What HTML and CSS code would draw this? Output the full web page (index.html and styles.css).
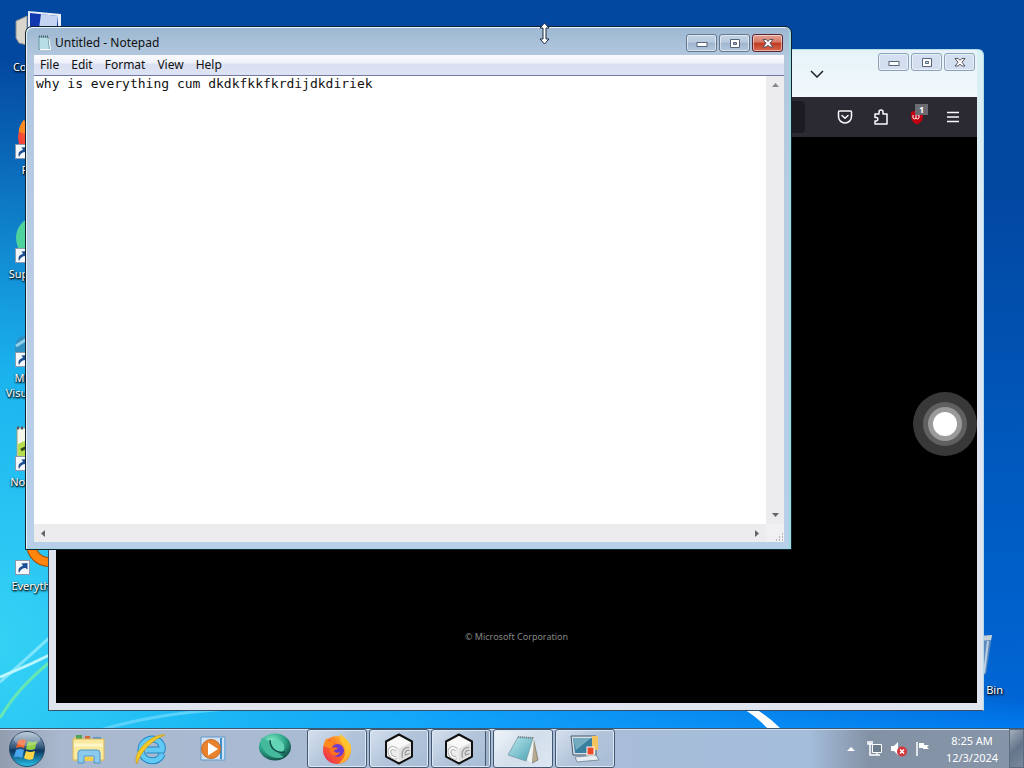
FILE: index.html
```html
<!DOCTYPE html>
<html lang="en">
<head>
  <meta charset="UTF-8" />
  <title>Desktop</title>
  <link rel="stylesheet" href="styles.css">
</head>
<body>

  <!-- shared symbols -->
  <svg class="defs" width="0" height="0" aria-hidden="true">
    <symbol id="shortcut" viewBox="0 0 15 15">
      <rect x=".5" y=".5" width="14" height="14" fill="#f4f8fc" stroke="#8a9bb0" />
      <path d="M4 13C2.500 9 4.500 6.500 8 6L6.500 3.500L12.500 3V9.500L10.500 8C7.500 8 5.500 9.500 4 13Z" fill="#1d4f96" />
    </symbol>
    <symbol id="min" viewBox="0 0 12 12">
      <rect x="1" y="5.500" width="10" height="4" fill="#fff" stroke="#56647a" />
    </symbol>
    <symbol id="max" viewBox="0 0 12 12">
      <path d="M1.500 2.500H10.500V10.500H1.500ZM4.500 5.500V7.500H7.500V5.500Z" fill="#fff" fill-rule="evenodd" stroke="#56647a" />
    </symbol>
    <symbol id="close" viewBox="0 0 12 12">
      <path d="M1 2.500H4.200L6 4.400L7.800 2.500H11L8 6.300L11 10H7.800L6 8.100L4.200 10H1L4 6.300Z" fill="#fff" stroke="#56505f" />
    </symbol>
    <symbol id="cube" viewBox="0 0 32 32">
      <path d="M16 1.500L29 8.500V23.500L16 30.500L3 23.500V8.500Z" fill="#f8f8f8" stroke="#111" stroke-width="2" stroke-linejoin="round" />
      <path d="M4 9.500L16 15.500V29L4 23Z" fill="#ececec" />
      <path d="M16 15.500L28 9.500V23L16 29Z" fill="#e0e0e0" />
      <path d="M13.500 16.500C9 13 5 16.500 7 21C8 24 11 25.500 13.500 24.500" fill="none" stroke="#aaa" stroke-width="3.500" />
      <path d="M13.500 16.500C9 13 5 16.500 7 21C8 24 11 25.500 13.500 24.500" fill="none" stroke="#fff" stroke-width="1.800" />
      <path d="M26 14.500C21 14 18 18 19.500 25M26.500 17.500C23 17 21.500 19 22.500 22L26.500 20.500" fill="none" stroke="#9a9a9a" stroke-width="1.300" />
    </symbol>
    <symbol id="firefox" viewBox="0 0 32 32">
      <circle cx="16" cy="17" r="14" fill="url(#fox)" />
      <path d="M19 1C25 5 27 8 30 13C31 22 25 30 17 31C25 25 26 18 22 12C19 8 18 5 19 1Z" fill="#ffc72e" opacity=".85" />
      <path d="M2.500 13C3 9 4.500 7 6 5L8 9L13 8L11 11L15 14L11 16Z" fill="#ff8b20" />
      <circle cx="16.500" cy="17.500" r="6.500" fill="#6b3bd0" />
      <path d="M9 15C12 14 14 14 17 15C16 17 14 16 13 18C14 20 17 20 19 19C17 24 11 24 9 19Z" fill="#ff701f" />
    </symbol>
    <linearGradient id="fox" x1="1" y1="0" x2="0" y2="1">
      <stop offset="0" stop-color="#ffdc3e" />
      <stop offset=".5" stop-color="#ff6b20" />
      <stop offset="1" stop-color="#e5205c" />
    </linearGradient>
    <radialGradient id="globe" cx=".4" cy=".3" r=".8">
      <stop offset="0" stop-color="#8af0ca" />
      <stop offset=".5" stop-color="#2fa98c" />
      <stop offset="1" stop-color="#0b3534" />
    </radialGradient>
    <linearGradient id="orb" x1="0" y1="0" x2="0" y2="1">
      <stop offset="0" stop-color="#a8bdd0" />
      <stop offset=".45" stop-color="#35597d" />
      <stop offset=".55" stop-color="#0d365f" />
      <stop offset="1" stop-color="#27c5ee" />
    </linearGradient>
    <linearGradient id="pad" x1="0" y1="0" x2="1" y2="1">
      <stop offset="0" stop-color="#bde9ee" />
      <stop offset="1" stop-color="#4aa2b4" />
    </linearGradient>
  </svg>

  <main class="desktop">
    <svg class="rays rays-left" viewBox="0 0 240 160" fill="none" aria-hidden="true">
      <path d="M0 82C20 65 38 48 60 28" stroke="#7ee4fb" stroke-width="3" />
      <path d="M0 77C20 69 36 62 60 50" stroke="#b9f6ff" stroke-width="3" />
      <path d="M0 118C14 94 30 78 50 62" stroke="#65e6b4" stroke-width="3" />
      <path d="M100 130C140 118 180 112 240 108" stroke="#5ad2fc" stroke-width="3" />
    </svg>
    <svg class="rays rays-right" viewBox="0 0 50 20" aria-hidden="true">
      <path d="M4 0L16 0Q30 8 42 20L29 20Q19 9 4 0Z" fill="#fff" />
    </svg>

    <div class="icon computer">
      <svg width="48" height="48" viewBox="0 0 48 48">
        <path d="M1 12L12 7V36L4 34L1 29Z" fill="#d9d6cd" stroke="#8b8c8c" />
        <path d="M13 2L46 5V34L13 36Z" fill="#e7edf6" />
        <path d="M15 4L43 7V32L15 34Z" fill="#1238b0" />
        <path d="M26 5L43 7L40 33L22 34Z" fill="#c3d3f0" />
      </svg>
      <span>Computer</span>
    </div>
    <div class="icon firefox">
      <svg width="48" height="48"><use href="#firefox" width="48" height="48" /><use href="#shortcut" y="32" width="15" height="15" /></svg>
      <span>Firefox</span>
    </div>
    <div class="icon supermium">
      <svg width="48" height="48"><circle cx="23" cy="22" r="22" fill="#4fd39c" /><use href="#shortcut" y="32" width="15" height="15" /></svg>
      <span>Supermium</span>
    </div>
    <div class="icon visual">
      <svg width="48" height="48"><path d="M0 24C4 14 14 12 26 16V40H0Z" fill="#2f91c2" /><path d="M1 26L12 19" stroke="#91cfe8" stroke-width="3" /><use href="#shortcut" y="32" width="15" height="15" /></svg>
      <span>Microsoft Visual Studio</span>
    </div>
    <div class="icon notepadpp">
      <svg width="48" height="48"><rect x="2" y="4" width="34" height="40" fill="#f4f7ea" stroke="#8ca07b" /><path d="M2 4H36" stroke="#556" stroke-width="3" stroke-dasharray="2 2" /><path d="M3 20L16 14V34H3Z" fill="#b5dc4a" /><path d="M6 26L14 22" stroke="#2f4c17" stroke-width="3" /><use href="#shortcut" y="32" width="15" height="15" /></svg>
      <span>Notepad++</span>
    </div>
    <div class="icon everything">
      <svg width="48" height="48"><circle cx="34" cy="16" r="18" fill="none" stroke="#a64a00" stroke-width="10" /><circle cx="34" cy="16" r="18" fill="none" stroke="#ff850f" stroke-width="8" /><use href="#shortcut" y="32" width="15" height="15" /></svg>
      <span>Everything</span>
    </div>
    <div class="icon recycle">
      <svg width="48" height="48" viewBox="0 0 48 48">
        <path d="M8 6L42 3L36 42L28 46L14 42Z" fill="#7295bb" opacity=".8" />
        <path d="M8 6L42 3L41 8L10 10Z" fill="#c5cfd8" />
        <path d="M38 9L34 41" stroke="#bed0e0" stroke-width="2" />
      </svg>
      <span>Recycle Bin</span>
    </div>

    <section class="window browser">
      <header class="tab-bar">
        <button class="list-tabs" aria-label="List all tabs">
          <svg width="14" height="8" viewBox="0 0 14 8"><path d="M1 1L7 7L13 1" fill="none" stroke="#222" stroke-width="1.500" /></svg>
        </button>
        <div class="controls">
          <button aria-label="Minimize"><svg width="12" height="12"><use href="#min" /></svg></button>
          <button aria-label="Maximize"><svg width="12" height="12"><use href="#max" /></svg></button>
          <button aria-label="Close"><svg width="12" height="12"><use href="#close" /></svg></button>
        </div>
      </header>
      <nav class="toolbar">
        <div class="address"></div>
        <button aria-label="Pocket">
          <svg width="16" height="16" viewBox="0 0 16 16" fill="none" stroke="#fbfbfe" stroke-width="1.500" stroke-linecap="round" stroke-linejoin="round"><path d="M2.500 2H13.500Q14.500 2 14.500 3V7.500A6.500 6.500 0 0 1 1.500 7.500V3Q1.500 2 2.500 2Z" /><path d="M5 6.500L8 9.300L11 6.500" /></svg>
        </button>
        <button aria-label="Extensions">
          <svg width="16" height="16" viewBox="0 0 16 16" fill="none" stroke="#fbfbfe" stroke-width="1.500" stroke-linejoin="round"><path d="M2 5H6V3A2 2 0 0 1 10 3V5H14V15H2V12H3.500A1.800 1.800 0 0 0 3.500 8.500H2Z" /></svg>
        </button>
        <button class="blocker" aria-label="Blocker">
          <svg width="16" height="16" viewBox="0 0 16 16"><path d="M8 1L14 3V7C14 11 12 14 8 15.500C4 14 2 11 2 7V3Z" fill="#c00010" /><path d="M4 6V9Q5.500 11 7 9V6M7 9Q8.500 11 10 9V6H8.500" fill="none" stroke="#fff" /></svg>
          <span class="badge">1</span>
        </button>
        <button aria-label="Menu">
          <svg width="14" height="12" viewBox="0 0 14 12"><path d="M1 1.500H13M1 6H13M1 10.500H13" stroke="#fbfbfe" stroke-width="1.500" /></svg>
        </button>
      </nav>
      <div class="page">
        <p>© Microsoft Corporation</p>
      </div>
    </section>

    <section class="window notepad">
      <header class="title-bar">
        <svg width="16" height="16" viewBox="0 0 16 16">
          <path d="M3 2H12L13.500 14.500H3Z" fill="#b7dde7" stroke="#6d9aa7" />
          <path d="M13 4L14.500 14.500H4" fill="none" stroke="#fff" />
          <path d="M3 1.500H13" stroke="#49606c" stroke-width="2" stroke-dasharray="1 1" />
        </svg>
        <h1>Untitled - Notepad</h1>
        <div class="controls">
          <button aria-label="Minimize"><svg width="12" height="12"><use href="#min" /></svg></button>
          <button aria-label="Maximize"><svg width="12" height="12"><use href="#max" /></svg></button>
          <button class="close" aria-label="Close"><svg width="12" height="12"><use href="#close" /></svg></button>
        </div>
      </header>
      <nav class="menu">
        <button>File</button>
        <button>Edit</button>
        <button>Format</button>
        <button>View</button>
        <button>Help</button>
      </nav>
      <div class="editor">
        <textarea aria-label="Text editor" spellcheck="false">why is everything cum dkdkfkkfkrdijdkdiriek</textarea>
        <div class="scroll vertical">
          <svg width="7" height="4" viewBox="0 0 7 4"><path d="M0 4L3.500 0L7 4Z" fill="#888" /></svg>
          <svg width="7" height="4" viewBox="0 0 7 4"><path d="M0 0L3.500 4L7 0Z" fill="#666" /></svg>
        </div>
        <div class="scroll horizontal">
          <svg width="4" height="7" viewBox="0 0 4 7"><path d="M4 0L0 3.500L4 7Z" fill="#666" /></svg>
          <svg width="4" height="7" viewBox="0 0 4 7"><path d="M0 0L4 3.500L0 7Z" fill="#666" /></svg>
        </div>
        <div class="grip">
          <svg width="10" height="10" viewBox="0 0 10 10"><path d="M8 2h1M5 5h1M8 5h1M2 8h1M5 8h1M8 8h1" stroke="#b5b5bd" stroke-width="2" /></svg>
        </div>
      </div>
    </section>

    <button class="touch" aria-label="Assistive touch"><span></span></button>

    <svg class="cursor" width="11" height="23" viewBox="0 0 11 23" aria-hidden="true">
      <path d="M5.500 1L10 6H7V17H10L5.500 22L1 17H4V6H1Z" fill="#fff" stroke="#1b2a40" />
    </svg>
  </main>

  <footer class="taskbar">
    <button class="start" aria-label="Start">
      <svg width="38" height="38" viewBox="0 0 38 38">
        <circle cx="19" cy="19" r="17.500" fill="url(#orb)" stroke="#314d68" />
        <path d="M10 11Q14 8 18 10L16 18Q12 16 8 18Z" fill="#f0632b" />
        <path d="M20 11Q25 13 29 11L27 19Q22 21 18 19Z" fill="#8fce45" />
        <path d="M8 20Q12 18 16 20L14 28Q10 26 6 27Z" fill="#4aa5ee" />
        <path d="M18 21Q22 23 27 21L25 29Q20 31 16 28Z" fill="#ffd447" />
        <ellipse cx="19" cy="9" rx="13" ry="7" fill="#fff" opacity=".25" />
      </svg>
    </button>
    <nav class="tasks">
      <button aria-label="Windows Explorer">
        <svg width="34" height="32" viewBox="0 0 34 32">
          <path d="M2 4H10L12 6H31V28H2Z" fill="#e8c765" />
          <path d="M4 2H10V6H4Z" fill="#4fa65a" /><path d="M13 3H18V7H13Z" fill="#d06a3c" /><path d="M21 4H29V8H21Z" fill="#5a93cc" />
          <path d="M1 6H32V27H1Z" fill="#f9eaa0" stroke="#d7b758" />
          <path d="M2 12H31" stroke="#fff7c9" stroke-width="3" />
          <path d="M6 30V20Q6 17 9 17H25Q28 17 28 20V30H22V23H12V30Z" fill="#8dcbee" stroke="#5296c2" />
          <path d="M13 24H21V28H13Z" fill="#f3ce4b" />
        </svg>
      </button>
      <button aria-label="Internet Explorer">
        <svg width="34" height="34" viewBox="0 0 34 34">
          <path d="M28 22C25 32 9 31 7 19C6 7 22 3 27 12Q29 15 28 18H12" fill="none" stroke="#2087c6" stroke-width="7" />
          <path d="M28 22C25 32 9 31 7 19C6 7 22 3 27 12Q29 15 28 18H12" fill="none" stroke="#62c9f4" stroke-width="5" />
          <path d="M3 32C-3 22 17 1 31 3C20 7 7 18 3 32Z" fill="#f2c928" stroke="#c99c18" stroke-width=".7" />
        </svg>
      </button>
      <button aria-label="Media Player">
        <svg width="32" height="32" viewBox="0 0 32 32">
          <path d="M4 4H28V27H4Z" fill="#d0e2f4" stroke="#6399c5" />
          <path d="M23 5H25V26H23Z" fill="#3f8fc9" /><path d="M27 6H29V26H27Z" fill="#81b4dc" />
          <circle cx="14" cy="16" r="9.500" fill="#e9822e" stroke="#c96a22" />
          <path d="M11 9.500L21 16L11 22.500Z" fill="#fff" />
        </svg>
      </button>
      <button aria-label="Supermium">
        <svg width="34" height="34" viewBox="0 0 34 34">
          <ellipse cx="17" cy="15" rx="16" ry="13.500" fill="url(#globe)" />
          <path d="M3 6C14 7 14 18 26 25C13 29 3 20 3 6Z" fill="#45b99c" />
          <path d="M12 10C18 5 28 9 26 18C23 22 15 20 12 10Z" fill="#62d3b4" />
          <path d="M12 8C12 16 18 22 27 20" fill="none" stroke="#124f4b" stroke-width="1.500" />
        </svg>
      </button>
      <button class="open" aria-label="Firefox"><svg width="32" height="32"><use href="#firefox" /></svg></button>
      <button class="open" aria-label="Cube"><svg width="32" height="32"><use href="#cube" /></svg></button>
      <button class="open stack" aria-label="Cube, two windows"><svg width="32" height="32"><use href="#cube" /></svg></button>
      <button class="open active" aria-label="Notepad">
        <svg width="34" height="32" viewBox="0 0 34 32">
          <path d="M27 4L32 27L26 30Z" fill="#b6a98e" stroke="#766e5d" stroke-width=".7" />
          <path d="M13 4L28 5L26 30L22 28Z" fill="#eef3f3" />
          <path d="M12 4L27 5L20 28L2 22Z" fill="url(#pad)" stroke="#70949d" stroke-width=".7" />
          <path d="M12 4L27 5" stroke="#77858a" stroke-width="2" stroke-dasharray="1 1" />
        </svg>
      </button>
      <button class="open" aria-label="Remote display">
        <svg width="34" height="32" viewBox="0 0 34 32">
          <path d="M3 3H28V22H5Z" fill="#d7dfe7" stroke="#465a6d" />
          <path d="M5 5H26V20H7Z" fill="#397f9f" /><path d="M5 5H23L8 17Z" fill="#73abc0" />
          <path d="M7 24L28 22L31 27L9 29Z" fill="#e6ecf0" stroke="#7d91a1" />
          <path d="M24 3H30V17H24Z" fill="#f3c35f" />
          <rect x="19" y="14" width="7" height="8" fill="#e94b28" stroke="#fff" />
        </svg>
      </button>
    </nav>
    <div class="tray">
      <button aria-label="Show hidden icons"><svg width="8" height="4" viewBox="0 0 8 4"><path d="M0 4L4 0L8 4Z" fill="#fff" /></svg></button>
      <button aria-label="Network">
        <svg width="16" height="16" viewBox="0 0 16 16"><path d="M5.500 3.500H14.500V11.500H5.500Z" fill="#6a7c8e" stroke="#fff" /><path d="M1 0V3H5V0M3 0V14H13M10 12V14" fill="none" stroke="#fff" stroke-width="1.500" /></svg>
      </button>
      <button aria-label="Volume muted">
        <svg width="16" height="16" viewBox="0 0 16 16"><path d="M0 5H3L7 1V14L3 10H0Z" fill="#fff" /><circle cx="11" cy="10.500" r="5" fill="#d5363c" /><path d="M9 8.500L13 12.500M13 8.500L9 12.500" stroke="#fff" stroke-width="1.500" /></svg>
      </button>
      <button aria-label="Action center">
        <svg width="16" height="16" viewBox="0 0 16 16"><path d="M2 1V15" stroke="#fff" stroke-width="1.500" /><path d="M4 2H9V4H14L12 6L14 8H8V7H4Z" fill="#fff" /></svg>
      </button>
      <div class="clock"><time>8:25 AM</time><time>12/3/2024</time></div>
    </div>
    <button class="show-desktop" aria-label="Show desktop"></button>
  </footer>

</body>
</html>
```
FILE: styles.css
```css
* {
  box-sizing: border-box;
}

body {
  margin: 0;
  height: 100vh;
  display: flex;
  flex-direction: column;
  overflow: hidden;
  font-family: "Noto Sans", "Open Sans", sans-serif;
  font-size: 12px;
  line-height: 16px;
  color: #111;
}

button {
  display: flex;
  align-items: center;
  justify-content: center;
  margin: 0;
  padding: 0;
  border: none;
  background: none;
  font: inherit;
  color: inherit;
}

svg {
  display: block;
  flex: none;
}

.defs {
  position: absolute;
}

/* wallpaper */
.desktop {
  flex: 1;
  position: relative;
  overflow: hidden;
  background:
    radial-gradient(ellipse 45% 80% at 0% 88%, #35d2f5 0%, rgba(30, 190, 245, 0.9) 45%, rgba(10, 120, 225, 0) 100%),
    radial-gradient(ellipse 60% 30% at 40% 100%, #12a5fb 0%, rgba(0, 120, 235, 0) 100%),
    linear-gradient(#0348a0 0%, #0247a0 25%, #005abf 65%, #0065d4 96%, #007af0 100%);
}

.rays {
  position: absolute;
}

.rays-left {
  left: 0;
  bottom: -32px;
  width: 240px;
  height: 160px;
}

.rays-right {
  left: 738px;
  bottom: 0;
  width: 50px;
  height: 20px;
}

/* desktop icons */
.icon {
  position: absolute;
  left: 1px;
  width: 76px;
  display: flex;
  flex-direction: column;
  align-items: center;
  text-align: center;
  font-size: 11px;
  line-height: 15px;
  color: #fff;
  text-shadow: 0 1px 2px #000, 1px 1px 2px #000;
}

.icon svg {
  margin-bottom: 2px;
}

.computer {
  top: 9px;
}

.firefox {
  top: 112px;
}

.supermium {
  top: 216px;
}

.visual {
  top: 320px;
}

.notepadpp {
  top: 424px;
}

.everything {
  top: 528px;
}

.recycle {
  left: auto;
  right: 12px;
  bottom: 31px;
}

/* windows */
.window {
  position: absolute;
  display: flex;
  flex-direction: column;
}

.controls {
  display: flex;
  gap: 2px;
}

.controls button {
  width: 31px;
  height: 18px;
  border: 1px solid #66788f;
  border-radius: 3px;
  background: linear-gradient(#c3d3e5 0%, #b9cadf 45%, #9fb5cf 50%, #b4c8de 100%);
  box-shadow: inset 0 0 0 1px rgba(255, 255, 255, 0.5);
}

.controls .close {
  border-color: #5a2430;
  background: linear-gradient(#e2a294 0%, #d67764 45%, #bf3a21 50%, #d76a4e 100%);
}

.browser {
  top: 49px;
  right: 40px;
  bottom: 17px;
  left: 48px;
  padding: 0 6px 7px 7px;
  border: 1px solid #35506c;
  border-top-color: #b4dce8;
  border-right-color: #b4dce8;
  border-radius: 6px 6px 0 0;
  background: linear-gradient(#d9f0f4, #dfe5f2 40%, #dfe4ee);
}

.browser .controls button {
  border-color: #8ea2bb;
  background: #d3dfee;
}

.tab-bar {
  display: flex;
  justify-content: flex-end;
  height: 47px;
  padding: 3px 2px 0 0;
  background: linear-gradient(#e5f3f9, #f2f8fb);
}

.list-tabs {
  width: 32px;
  height: 42px;
  margin-right: 45px;
}

.toolbar {
  display: flex;
  gap: 4px;
  height: 40px;
  padding: 4px 8px;
  background: #2b2a33;
}

.toolbar button {
  position: relative;
  width: 32px;
  height: 32px;
}

.address {
  flex: 1;
  margin-right: 20px;
  border-radius: 4px;
  background: #1c1b22;
}

.badge {
  position: absolute;
  top: 3px;
  right: 5px;
  width: 13px;
  background: #6b6b72;
  color: #fff;
  font-size: 9px;
  font-weight: bold;
  line-height: 11px;
}

.page {
  flex: 1;
  display: flex;
  align-items: flex-end;
  justify-content: center;
  background: #000;
}

.page p {
  margin: 0 0 58px;
  font-size: 9px;
  color: #858585;
}

.notepad {
  top: 26px;
  right: 232px;
  bottom: 178px;
  left: 25px;
  padding: 0 7px 7px 8px;
  border: 1px solid #14212f;
  border-radius: 7px 7px 0 0;
  background: linear-gradient(#9db8d2 0, #b3c8de 30px, #b9cce4 50%, #b8cfea 100%);
  box-shadow: inset 1px 1px 0 #e5f3fa, inset -2px -1px 0 #9bd9df;
}

.title-bar {
  display: flex;
  align-items: center;
  height: 28px;
  padding: 4px 0 0 2px;
}

.title-bar h1 {
  flex: 1;
  margin: 0 0 0 3px;
  font-size: 12px;
  font-weight: normal;
}

.title-bar .controls {
  padding-right: 1px;
}

.menu {
  display: flex;
  height: 21px;
  border-bottom: 1px solid #707aa0;
  background: linear-gradient(#fbfcfe 0%, #eef1fa 40%, #dae0f1 45%, #dde3f4 100%);
}

.menu button {
  padding: 0 6px;
}

.editor {
  flex: 1;
  display: grid;
  grid-template-columns: 1fr 18px;
  grid-template-rows: 1fr 18px;
  background: #fff;
}

.editor textarea {
  width: 100%;
  height: 100%;
  padding: 0 2px;
  border: none;
  outline: none;
  resize: none;
  overflow: hidden;
  font: 13px/16px "DejaVu Sans Mono", monospace;
  color: #111;
}

.scroll {
  display: flex;
  align-items: center;
  justify-content: space-between;
  background: #ececee;
}

.vertical {
  flex-direction: column;
  padding: 7px 0;
}

.horizontal {
  padding: 0 7px;
}

.grip {
  display: flex;
  align-items: flex-end;
  justify-content: flex-end;
  background: #f0f0f2;
}

.touch {
  position: absolute;
  top: 392px;
  right: 47px;
  width: 64px;
  height: 64px;
  border-radius: 50%;
  background: #383838;
}

.touch span {
  width: 24px;
  height: 24px;
  border-radius: 50%;
  background: #fff;
  box-shadow: 0 0 0 5px #9a9a9a, 0 0 0 10px #606060;
}

.cursor {
  position: absolute;
  top: 22px;
  left: 539px;
}

/* taskbar */
.taskbar {
  display: flex;
  height: 40px;
  border-top: 1px solid #3c5873;
  background: linear-gradient(90deg, #929daf 0, #a9b8ce 60px, #a9bdd8 50%, #a4bddb 79%, #8391a4 85%, #8695a8 100%);
  box-shadow: inset 0 1px 0 #d5e2ee;
}

.start {
  width: 54px;
  margin-right: 5px;
}

.tasks {
  flex: 1;
  display: flex;
  gap: 2px;
}

.tasks button {
  width: 60px;
}

.tasks .open {
  border: 1px solid #445970;
  border-radius: 3px;
  background: linear-gradient(135deg, #d5e0ee, #b2c4da 50%, #a7bdd6);
  box-shadow: inset 0 0 0 1px #dce8f3;
}

.tasks .active {
  background: linear-gradient(135deg, #eff4f9, #d2deeb 50%, #dce7f2);
}

.tasks .stack {
  padding-right: 5px;
  box-shadow: inset 0 0 0 1px #dce8f3, inset -4px 0 0 #9eb2ca, inset -5px 0 0 #445970;
}

.tray {
  display: flex;
  align-items: center;
  color: #fff;
}

.tray button {
  width: 24px;
  height: 38px;
}

.clock {
  display: flex;
  flex-direction: column;
  width: 74px;
  text-align: center;
  font-size: 11px;
  line-height: 17px;
}

.show-desktop {
  width: 15px;
  border: 1px solid #5c6b7d;
  background: linear-gradient(135deg, #a3aebb, #64748a 50%, #7b8b9c);
}
```
